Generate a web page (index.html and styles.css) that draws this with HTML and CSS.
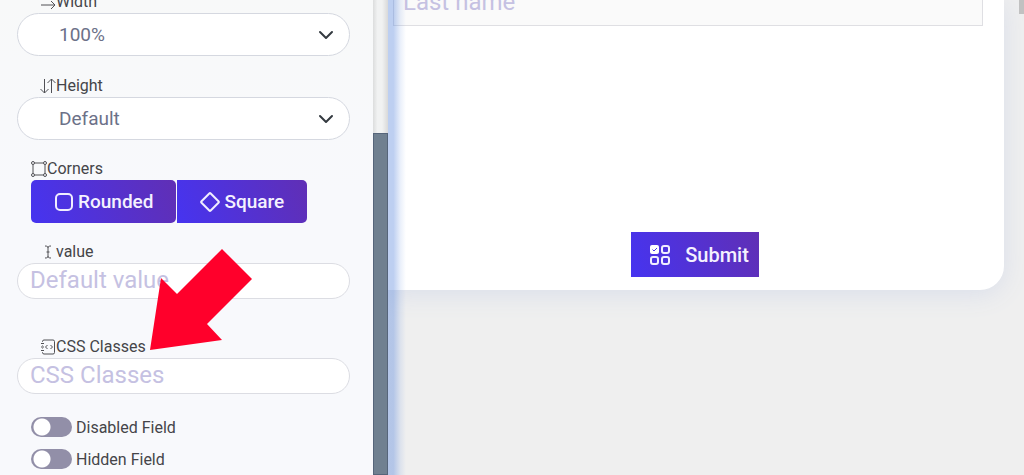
FILE: index.html
```html
<!DOCTYPE html>
<html lang="en">
<head>
    <meta charset="UTF-8">
    <meta name="viewport" content="width=device-width, initial-scale=1">
    <title>Form Builder</title>
    <link rel="stylesheet" href="styles.css">
</head>
<body>
    <div class="builder">
        <form class="settings">
            <div class="field">
                <label class="caption" for="width">
                    <svg class="icon" viewBox="0 0 16 16"><path d="M15 5H1l4-4M1 11h14l-4-4M15 11l-4 4"/></svg>Width
                </label>
                <select class="select" id="width">
                    <option>100%</option>
                    <option>50%</option>
                </select>
            </div>

            <div class="field">
                <label class="caption" for="height">
                    <svg class="icon" viewBox="0 0 16 16"><path d="M4.500 1v14M.5 11l4 4 4-4M11.500 15V1M7.500 5l4-4 4 4"/></svg>Height
                </label>
                <select class="select" id="height">
                    <option>Default</option>
                    <option>Large</option>
                </select>
            </div>

            <div class="field" role="group" aria-labelledby="corners">
                <div class="caption caption-corners" id="corners">
                    <svg class="icon" viewBox="0 0 16 16"><path d="M3.500 2h9M3.500 14h9M2 3.500v9M14 3.500v9"/><circle cx="2" cy="2" r="1.500"/><circle cx="14" cy="2" r="1.500"/><circle cx="2" cy="14" r="1.500"/><circle cx="14" cy="14" r="1.500"/></svg>Corners
                </div>
                <div class="button-group">
                    <button class="btn" type="button">
                        <svg class="btn-icon" viewBox="0 0 20 20"><rect x="2" y="2" width="16" height="16" rx="4"/></svg>
                        Rounded
                    </button>
                    <button class="btn" type="button">
                        <svg class="btn-icon" viewBox="0 0 20 20"><rect x="3.500" y="3.500" width="13" height="13" rx="1" transform="rotate(45 10 10)"/></svg>
                        Square
                    </button>
                </div>
            </div>

            <div class="field field-value">
                <label class="caption" for="value">
                    <svg class="icon" viewBox="0 0 16 16"><path d="M5 2c2 0 3 .5 3 1.500C8 2.500 9 2 11 2M8 3v10M5 14c2 0 3-.5 3-1.500 0 1 1 1.500 3 1.500M6.500 8h3"/></svg>
                    <span>value</span>
                </label>
                <input class="input" type="text" id="value" placeholder="Default value">
            </div>

            <div class="field">
                <label class="caption" for="classes">
                    <svg class="icon" viewBox="0 0 16 16"><path d="M2.500 3V2.500q0-1.500 1.500-1.500h9q1.500 0 1.500 1.500v11q0 1.500-1.500 1.500H4q-1.500 0-1.500-1.500V13M1 4.500h3M1 8h3M1 11.500h3M2.500 6v.5M2.500 9.500v.5M7.500 6l-2 2 2 2M10.500 6l2 2-2 2"/></svg>CSS Classes
                </label>
                <input class="input" type="text" id="classes" placeholder="CSS Classes">
            </div>

            <div class="switch-row">
                <input class="switch" type="checkbox" id="disabled">
                <label for="disabled">Disabled Field</label>
            </div>
            <div class="switch-row">
                <input class="switch" type="checkbox" id="hidden">
                <label for="hidden">Hidden Field</label>
            </div>

            <svg class="pointer" viewBox="0 0 102 101"><path d="M0 101 11 29 27 45 72 0 102 30 57 75 72 91Z"/></svg>
        </form>

        <div class="scrollbar">
            <div class="scrollbar-thumb"></div>
        </div>

        <main class="preview">
            <div class="card">
                <input class="name-input" type="text" placeholder="Last name" aria-label="Last name">
                <div class="actions">
                    <button class="btn submit" type="submit">
                        <svg class="submit-icon" viewBox="0 0 22 22">
                            <rect class="solid" x="1" y="1" width="9" height="9" rx="2"/>
                            <rect x="13" y="2" width="7" height="7" rx="2"/>
                            <rect x="2" y="13" width="7" height="7" rx="2"/>
                            <rect x="13" y="13" width="7" height="7" rx="2"/>
                            <path class="tick" d="m3.500 5.500 1.500 1.500 3-3"/>
                        </svg>
                        Submit
                    </button>
                </div>
            </div>
            <div class="page-scroll"></div>
        </main>
    </div>
</body>
</html>
```
FILE: styles.css
```css
* {
    box-sizing: border-box;
}

body {
    margin: 0;
    font-family: Roboto, sans-serif;
    font-size: 16px;
    color: #454549;
    background: #efefef;
}

button, input, select {
    font-family: inherit;
}

.builder {
    display: grid;
    grid-template-columns: 373px 15px 1fr;
    height: 100vh;
    overflow: hidden;
}

/* settings panel */
.settings {
    position: relative;
    min-height: 0;
    padding: 0 23px 0 17px;
    background: linear-gradient(#f8f9f9, #f8f9fc 40%);
}

/* panel is scrolled part of the way down */
.field:first-child {
    margin-top: -10px;
}

.field {
    margin-bottom: 17px;
}

.field-value {
    margin-bottom: 36px;
}

.caption {
    display: flex;
    align-items: center;
    padding-left: 23px;
    line-height: 23px;
}

.field:nth-child(2) {
    margin-top: 18px;
}

.caption-corners {
    padding-left: 14px;
}

.icon {
    width: 16px;
    height: 16px;
    fill: none;
    stroke: #505055;
    stroke-width: 1;
}

.select {
    display: block;
    width: 100%;
    height: 43px;
    padding: 0 40px 1px 41px;
    appearance: none;
    border: 1px solid #d5d8e0;
    border-radius: 22px;
    font-size: 19px;
    color: #6c7188;
    background: #fff url("data:image/svg+xml,%3Csvg xmlns='http://www.w3.org/2000/svg' viewBox='0 0 16 16'%3E%3Cpath fill='none' stroke='%23343a40' stroke-width='2' stroke-linecap='round' stroke-linejoin='round' d='m2 5 6 6 6-6'/%3E%3C/svg%3E") no-repeat right 15px center / 16px 16px;
}

.input {
    display: block;
    width: 100%;
    height: 36px;
    padding: 0 12px 2px;
    border: 1px solid #dcdde3;
    border-radius: 18px;
    font-size: 24px;
    background: #fff;
}

::placeholder {
    color: #c5c1e2;
    opacity: 1;
}

.button-group {
    display: flex;
    gap: 1px;
    padding-left: 14px;
}

.btn {
    display: flex;
    align-items: center;
    justify-content: center;
    gap: 4px;
    height: 43px;
    padding: 0 23px;
    border: 0;
    border-radius: 5px;
    font-size: 19px;
    font-weight: 500;
    color: #f4f1ff;
    background: linear-gradient(70deg, #4634f0, #602fb5);
}

.button-group .btn:last-child {
    border-radius: 0 5px 5px 0;
}

.btn-icon {
    width: 20px;
    height: 20px;
    fill: none;
    stroke: #f0edff;
    stroke-width: 2;
}

.switch-row {
    display: flex;
    align-items: center;
    gap: 4px;
    height: 32px;
    padding-left: 14px;
}

.switch {
    width: 41px;
    height: 20px;
    margin: 0;
    appearance: none;
    border-radius: 10px;
    background: radial-gradient(circle at 11px 10px, #fff 8px, #928fa8 9px);
}

.switch:checked {
    background: radial-gradient(circle at 30px 10px, #fff 8px, #4634f0 9px);
}

/* arrow lying over the fields */
.pointer {
    position: absolute;
    top: 249px;
    left: 150px;
    width: 102px;
    height: 101px;
    fill: #ff002b;
    pointer-events: none;
}

/* panel scrollbar */
.scrollbar {
    padding-top: 133px;
    background: linear-gradient(90deg, #dcdddd, #f1f2f2 30%, #f1f2f2 60%, #d9d9d9);
}

.scrollbar-thumb {
    height: 100%;
    border: 1px solid #56657a;
    background: #708090;
}

/* form preview */
.preview {
    position: relative;
    display: flex;
    align-items: flex-start;
    min-width: 0;
    overflow: hidden;
}

.preview::before {
    content: "";
    position: absolute;
    top: 0;
    bottom: 0;
    left: 0;
    z-index: 1;
    width: 18px;
    background: linear-gradient(90deg, rgba(90, 135, 220, .4) 30%, rgba(90, 135, 220, .12) 70%, rgba(90, 135, 220, 0));
    pointer-events: none;
}

.card {
    flex: 1;
    padding: 0 21px 13px 5px;
    border-radius: 0 0 24px 0;
    background: #fff;
    box-shadow: 0 4px 26px #d9deea;
}

.name-input {
    display: block;
    width: 100%;
    height: 48px;
    margin-top: -22px;
    padding: 0 9px 1px;
    border: 1px solid #dfdfe3;
    font-size: 24px;
    background: #fafafa;
}

.actions {
    display: flex;
    justify-content: center;
    padding: 206px 0 0 14px;
}

.submit {
    gap: 14px;
    height: 45px;
    padding: 1px 10px 0 18px;
    border-radius: 0;
    font-size: 20px;
}

.submit-icon {
    width: 22px;
    height: 22px;
    fill: none;
    stroke: #f0edff;
    stroke-width: 2;
}

.submit-icon .solid {
    fill: #fff;
    stroke: none;
}

.submit-icon .tick {
    stroke: #4a34e4;
    stroke-width: 1;
}

.page-scroll {
    flex: 0 0 5px;
    height: 14px;
    margin-left: 15px;
    background: #c1c1c1;
}
```
